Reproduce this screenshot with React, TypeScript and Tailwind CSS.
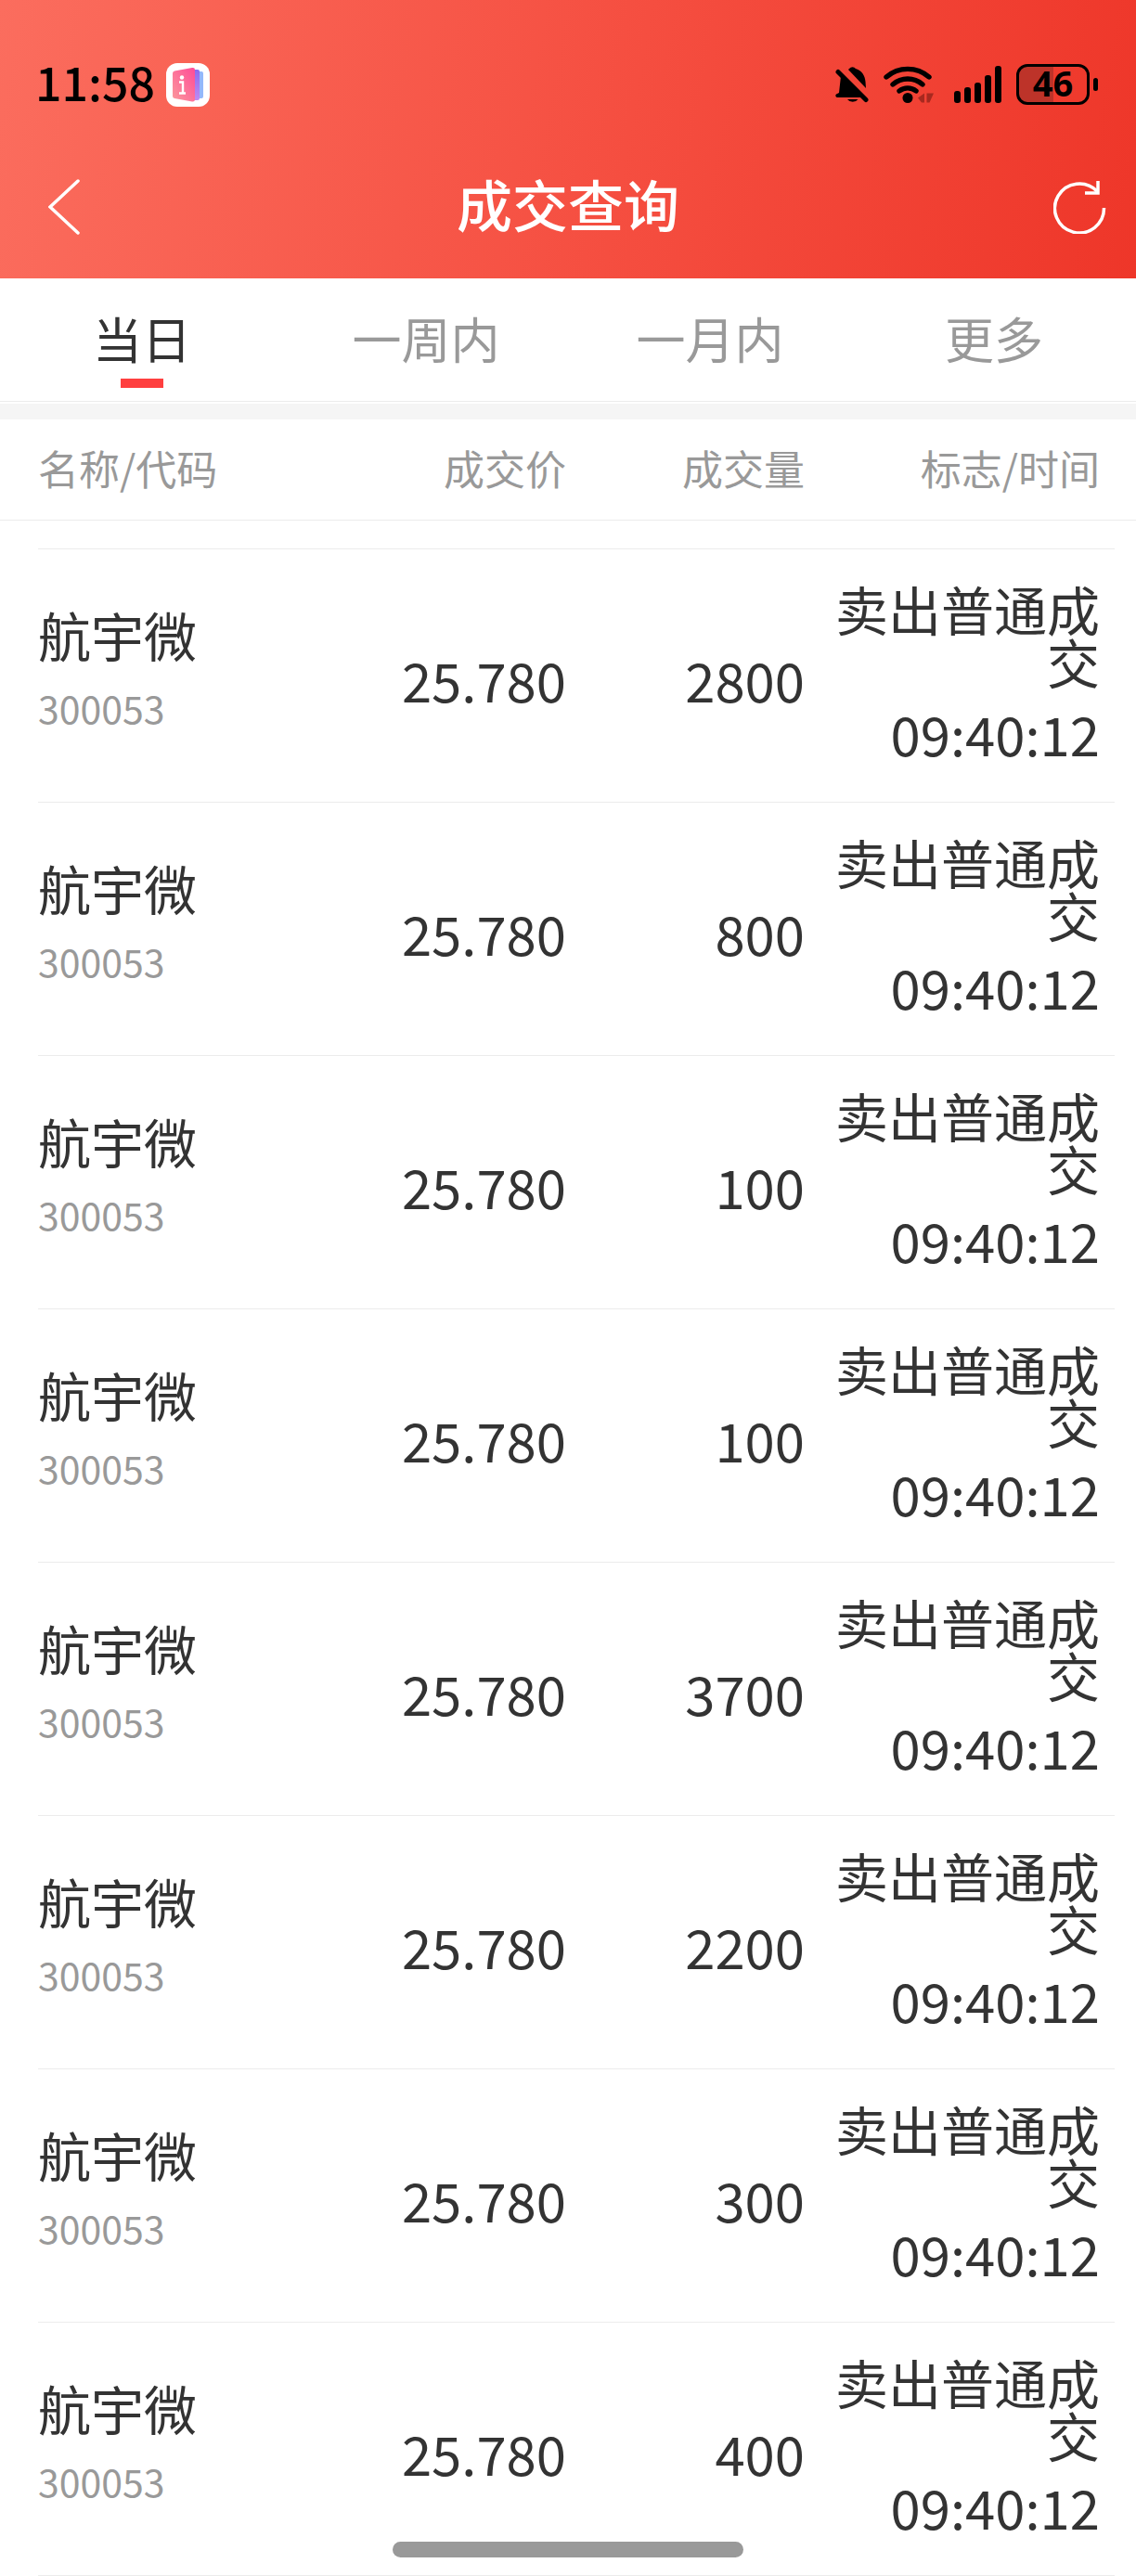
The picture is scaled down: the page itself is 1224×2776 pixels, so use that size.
import React, { useState } from 'react';

type Deal = { name: string; code: string; price: string; volume: number; flag: string; time: string };

const TABS = ['当日', '一周内', '一月内', '更多'];

const DEALS: Deal[] = [2800, 800, 100, 100, 3700, 2200, 300, 400].map((volume) => ({
  name: '航宇微',
  code: '300053',
  price: '25.780',
  volume,
  flag: '卖出普通成交',
  time: '09:40:12',
}));

const AppBadge = () => (
  <svg width="47" height="47" viewBox="0 0 47 47" aria-hidden="true">
    <defs>
      <linearGradient id="book" x1="1" y1="0" x2="0" y2="1">
        <stop offset="0" stopColor="#ff4a97" />
        <stop offset="1" stopColor="#fb9a9c" />
      </linearGradient>
      <linearGradient id="page" x1="0" y1="0" x2="0" y2="1">
        <stop offset="0" stopColor="#8a6cf0" />
        <stop offset="1" stopColor="#c08af0" />
      </linearGradient>
    </defs>
    <rect width="47" height="47" rx="12" fill="#fff" />
    <rect x="30" y="9" width="10" height="29" rx="2" fill="#93b8fb" />
    <rect x="26" y="7" width="10" height="33" rx="2" fill="url(#page)" />
    <path d="M7 11q0-2 2-2.500L28 5q3-.5 3 2v32q0 3-3 2.500L9 38q-2-.5-2-2.500z" fill="url(#book)" />
    <circle cx="17" cy="15.500" r="2.200" fill="#fff" />
    <path d="M14 20.500h4V32M14 32.500h7" fill="none" stroke="#fff" strokeWidth="2.400" />
  </svg>
);

const BellOff = () => (
  <svg width="36" height="41" viewBox="0 0 36 41" aria-hidden="true">
    <path d="M6 11 28 34H2a2 2 0 0 1-1-3.500L4 29z" />
    <path d="M14 4l1-1a4.500 4.500 0 0 1 7 0C29 5 32 11 32.500 17l.5 7z" />
    <path d="M13 36h11.500a6.500 5 0 0 1-11.500 0z" />
    <path d="M3 6.500 33 36.500" stroke="#000" strokeWidth="5" strokeLinecap="round" />
  </svg>
);

const Wifi = () => (
  <svg width="54" height="42" viewBox="0 0 54 42" aria-hidden="true">
    <g fill="none" stroke="#000" strokeWidth="5.400" strokeLinecap="round">
      <path d="M3 13a35 35 0 0 1 46 0" />
      <path d="M10 21a24.500 24.500 0 0 1 32 0" />
      <path d="M17 28a14.500 14.500 0 0 1 18 0" />
    </g>
    <circle cx="26" cy="35.500" r="5.500" />
    <path d="M44 30.500v10h-3l-4-5zM46.500 30.500H54l-4.500 10h-3z" fill="#a8291f" />
  </svg>
);

const Signal = () => (
  <svg width="51" height="42" viewBox="0 0 51 42" aria-hidden="true">
    <rect x="0" y="28" width="7" height="13" rx="3" />
    <rect x="11" y="24" width="7" height="17" rx="3" />
    <rect x="22" y="19" width="7" height="22" rx="3" />
    <rect x="33" y="11" width="7" height="30" rx="3" />
    <rect x="44" y="1" width="7" height="40" rx="3" />
  </svg>
);

const Battery = () => (
  <div className="flex items-center gap-1">
    <div className="flex h-11 w-[79px] items-center justify-center rounded-[12px] border-3 border-black bg-linear-to-r from-[#bd3329] from-50% to-transparent to-50% pb-1 font-['Open_Sans',sans-serif] text-[38px] leading-none font-bold">
      46
    </div>
    <div className="h-[14px] w-[5px] rounded-full bg-black" />
  </div>
);

const App: React.FC = () => {
  const [tab, setTab] = useState(0);

  return (
    <div className="min-h-screen bg-white font-['Noto_Sans_CJK_SC',sans-serif] text-[#333]">
      <header className="bg-linear-[100deg,#fb6d5e,#f54e40_55%,#ee3629]">
        <div className="flex h-[150px] items-center justify-between pt-8 pr-[41px] pl-[38px] text-black">
          <div className="flex items-center gap-3">
            <span className="pb-2 text-[50px] leading-none font-medium">11:58</span>
            <AppBadge />
          </div>
          <div className="flex items-center">
            <div className="mr-4"><BellOff /></div>
            <div className="mr-[22px]"><Wifi /></div>
            <div className="mr-4"><Signal /></div>
            <Battery />
          </div>
        </div>
        <div className="grid h-[150px] grid-cols-[1fr_auto_1fr] items-center px-8 pb-1 text-white">
          <button aria-label="返回" className="justify-self-start pl-5">
            <svg width="34" height="60" viewBox="0 0 34 60" fill="none" stroke="currentColor" strokeWidth="3.500" strokeLinecap="round">
              <path d="M32 2 2 30l30 28" />
            </svg>
          </button>
          <h1 className="pb-2 text-[60px] leading-none font-medium">成交查询</h1>
          <button aria-label="刷新" className="justify-self-end">
            <svg width="57" height="58" viewBox="0 0 57 58" fill="none" stroke="currentColor" strokeWidth="3.500">
              <path d="M54.500 30A26.500 26.500 0 1 1 47 12" />
              <path d="M48 1v13H34" />
            </svg>
          </button>
        </div>
      </header>

      <nav className="grid h-[133px] grid-cols-4 border-b border-[#ececec] text-[53px]">
        {TABS.map((label, i) => (
          <button
            key={label}
            onClick={() => setTab(i)}
            className={`flex flex-col items-center pt-7 ${i === tab ? 'text-[#333]' : 'text-[#999]'}`}
          >
            <span className="leading-[72px]">{label}</span>
            {i === tab && <span className="mt-2 h-[10px] w-[46px] bg-[#ff3f3f]" />}
          </button>
        ))}
      </nav>
      <div className="mt-[2px] h-[17px] bg-[#f5f5f5]" />

      {/* first and last columns are gutters, so the row lines stay inset */}
      <table className="w-full table-fixed border-separate border-spacing-0">
        <colgroup>
          <col className="w-[41px]" />
          <col />
          <col className="w-[280px]" />
          <col className="w-[257px]" />
          <col className="w-[334px]" />
          <col className="w-[23px]" />
        </colgroup>
        <thead>
          <tr className="h-[109px] text-right text-[44px] leading-none text-[#999] *:border-b *:border-[#ececec] *:pb-1 *:font-normal">
            <td />
            <th scope="col" className="text-left">名称/代码</th>
            <th scope="col">成交价</th>
            <th scope="col">成交量</th>
            <th scope="col" className="pr-4">标志/时间</th>
            <td />
          </tr>
        </thead>
        <tbody>
          <tr className="h-[31px]">
            <td />
            <td colSpan={4} className="border-b border-[#ececec]" />
            <td />
          </tr>
          {DEALS.map((deal, i) => (
            <tr key={i} className="h-[273px] text-right align-top text-[58px] leading-none">
              <td />
              <td className="border-b border-[#ececec] pt-[63px] text-left">
                <div className="text-[57px]">{deal.name}</div>
                <div className="mt-[30px] text-[41px] text-[#999]">{deal.code}</div>
              </td>
              <td className="border-b border-[#ececec] pt-[111px]">{deal.price}</td>
              <td className="border-b border-[#ececec] pt-[111px]">{deal.volume}</td>
              <td className="border-b border-[#ececec] pt-[35px] pr-4">
                <div className="text-[57px]">{deal.flag}</div>
                <div className="mt-5">{deal.time}</div>
              </td>
              <td />
            </tr>
          ))}
        </tbody>
      </table>

      <div className="fixed bottom-5 left-1/2 h-[17px] w-[378px] -translate-x-1/2 rounded-full bg-[#999]" />
    </div>
  );
};

export default App;
